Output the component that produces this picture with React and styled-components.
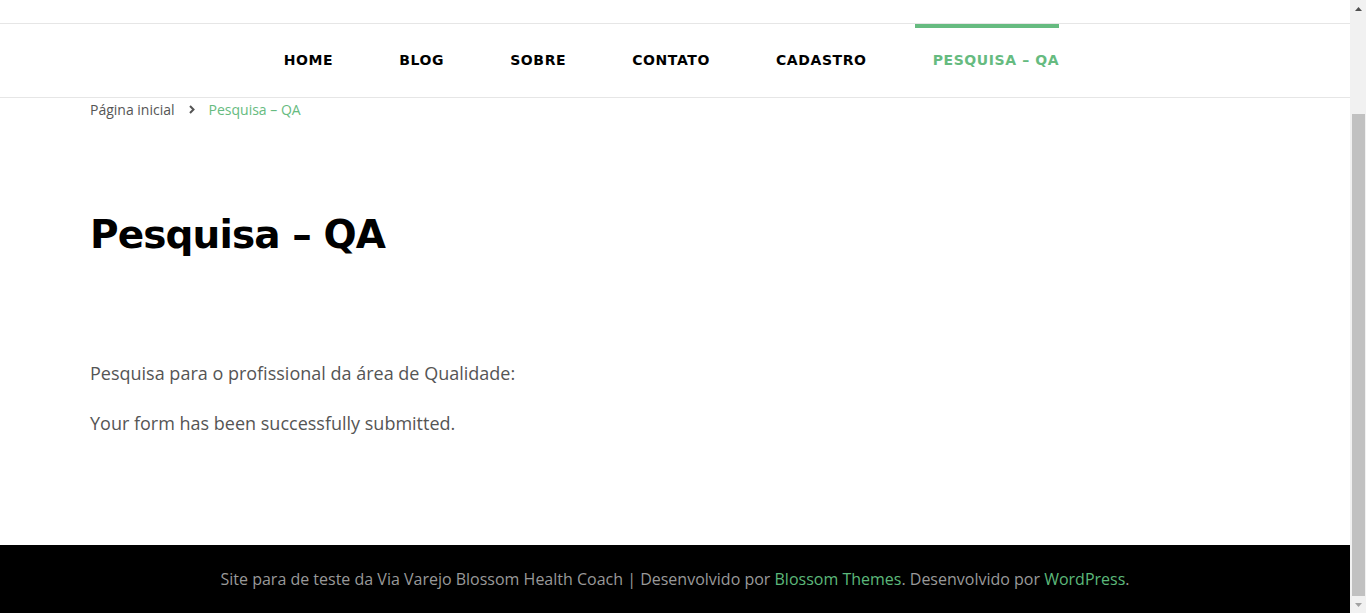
import React from 'react';
import styled, { createGlobalStyle } from 'styled-components';

const GlobalStyle = createGlobalStyle`
  html, body {
    margin: 0;
    padding: 0;
    background: #fff;
    overflow: hidden;
  }
  * { box-sizing: border-box; }
`;

const Shell = styled.div`
  display: flex;
  width: 100%;
  height: 100vh;
`;

const Page = styled.div`
  flex: 1;
  display: flex;
  flex-direction: column;
  min-width: 0;
`;

const TopStrip = styled.div`
  height: 24px;
  border-bottom: 1px solid #e6e6e6;
`;

const Nav = styled.nav`
  height: 74px;
  border-bottom: 1px solid #e6e6e6;
  display: flex;
  justify-content: center;
  padding-right: 25px;
`;

const NavList = styled.ul`
  display: flex;
  gap: 48px;
  list-style: none;
  margin: 0;
  padding: 0;
  height: 100%;
`;

const NavItem = styled.li`
  position: relative;
  display: flex;
  align-items: center;
  padding: 0 0 1px 18px;
  font-family: "DejaVu Sans", "Noto Sans", sans-serif;
  font-weight: 700;
  font-size: 14px;
  letter-spacing: 0.6px;
  color: ${p => (p.$active ? '#66bb80' : '#000')};

  &::before {
    content: '';
    display: ${p => (p.$active ? 'block' : 'none')};
    position: absolute;
    top: 0;
    left: 0;
    right: 0;
    height: 4px;
    background: #66bb80;
  }
`;

const Main = styled.main`
  flex: 1;
  padding: 0 90px;
`;

const Crumbs = styled.div`
  display: flex;
  align-items: center;
  gap: 14px;
  padding-top: 2px;
  font-family: "Open Sans", sans-serif;
  font-size: 14px;
  color: #555;
`;

const Crumb = styled.span`
  color: ${p => (p.$current ? '#66bb80' : '#555')};
`;

const Title = styled.h1`
  margin: 93px 0 0;
  font-family: "DejaVu Sans", "Noto Sans", sans-serif;
  font-weight: 700;
  font-size: 39px;
  line-height: 1.2;
  color: #000;
  letter-spacing: -0.9px;
`;

const Body = styled.div`
  margin-top: 99px;
  font-family: "Open Sans", sans-serif;
  font-size: 18px;
  line-height: 30px;
  color: #555;

  p {
    margin: 0 0 20px;
  }
`;

const Footer = styled.footer`
  height: 68px;
  background: #000;
  display: flex;
  align-items: center;
  justify-content: center;
  font-family: "Open Sans", sans-serif;
  font-size: 16px;
  color: #999;
`;

const FooterLink = styled.a`
  color: #5cb87a;
  text-decoration: none;
`;

const Scrollbar = styled.div`
  width: 16px;
  background: #f1f1f1;
  display: flex;
  flex-direction: column;
  align-items: center;
`;

const Arrow = styled.div`
  height: 17px;
  width: 100%;
  display: flex;
  align-items: center;
  justify-content: center;
`;

const Thumb = styled.div`
  flex: 1;
  width: 13px;
  margin-top: 97px;
  background: #c1c1c1;
`;

const Chevron = () => (
  <svg width="6" height="9" viewBox="0 0 6 9">
    <path d="M1 1 L4.5 4.5 L1 8" fill="none" stroke="#555" strokeWidth="2" />
  </svg>
);

const items = ['HOME', 'BLOG', 'SOBRE', 'CONTATO', 'CADASTRO', 'PESQUISA – QA'];

export default function App() {
  return (
    <>
      <GlobalStyle />
      <Shell>
        <Page>
          <TopStrip />
          <Nav>
            <NavList>
              {items.map((it, i) => (
                <NavItem key={it} $active={i === items.length - 1}>{it}</NavItem>
              ))}
            </NavList>
          </Nav>
          <Main>
            <Crumbs>
              <Crumb>Página inicial</Crumb>
              <Chevron />
              <Crumb $current>Pesquisa – QA</Crumb>
            </Crumbs>
            <Title>Pesquisa – QA</Title>
            <Body>
              <p>Pesquisa para o profissional da área de Qualidade:</p>
              <p>Your form has been successfully submitted.</p>
            </Body>
          </Main>
          <Footer>
            Site para de teste da Via Varejo Blossom Health Coach | Desenvolvido por&nbsp;
            <FooterLink href="#">Blossom Themes</FooterLink>. Desenvolvido por&nbsp;
            <FooterLink href="#">WordPress</FooterLink>.
          </Footer>
        </Page>
        <Scrollbar>
          <Arrow>
            <svg width="7" height="4" viewBox="0 0 7 4"><path d="M0 4 L3.5 0 L7 4 Z" fill="#505050" /></svg>
          </Arrow>
          <Thumb />
          <Arrow>
            <svg width="7" height="4" viewBox="0 0 7 4"><path d="M0 0 L3.5 4 L7 0 Z" fill="#a3a3a3" /></svg>
          </Arrow>
        </Scrollbar>
      </Shell>
    </>
  );
}
